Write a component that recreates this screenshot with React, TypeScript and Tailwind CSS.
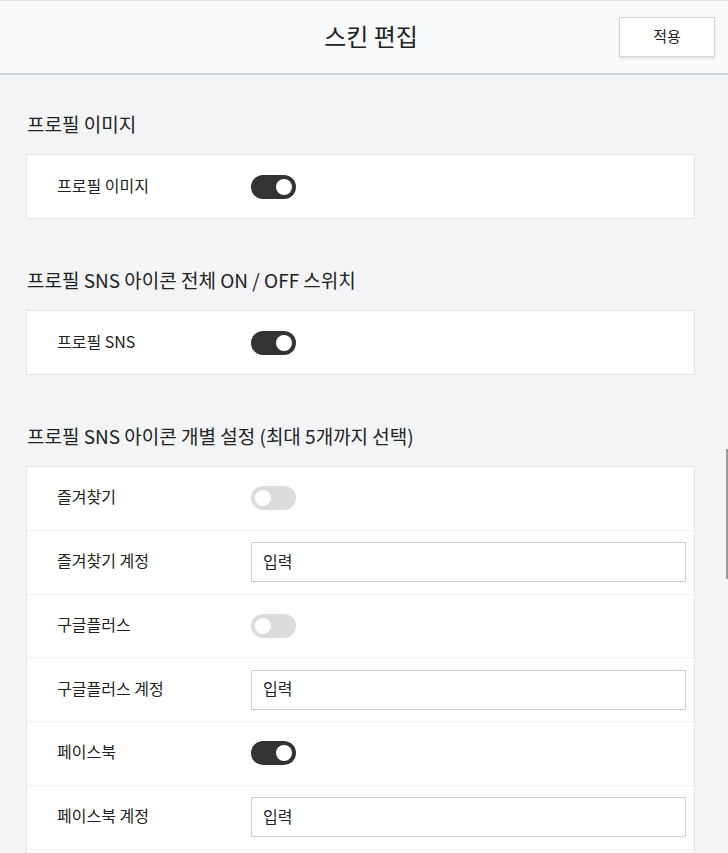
import React, { useState } from "react";

type Row =
  | { kind: "toggle"; label: string; on: boolean }
  | { kind: "input"; label: string };

const FONT = { fontFamily: '"Noto Sans CJK KR", "Noto Sans", sans-serif' };

function Toggle({ on, onChange }: { on: boolean; onChange: () => void }) {
  return (
    <button
      onClick={onChange}
      className={`relative h-6 w-[45px] shrink-0 rounded-full ${on ? "bg-[#333333]" : "bg-[#dcdcdc]"}`}
    >
      <span
        className={`absolute top-1 h-4 w-4 rounded-full bg-white ${on ? "right-1" : "left-1"}`}
      />
    </button>
  );
}

function SettingRow({ row, last, on, onToggle }: { row: Row; last: boolean; on: boolean; onToggle: () => void }) {
  return (
    <div className={`flex items-center ${last ? "h-[63px]" : "h-[63.75px] border-b border-[#eef0f3]"}`}>
      <div className="w-[224px] shrink-0 pb-[4px] pl-[30px] text-[16px] text-[#222]">{row.label}</div>
      {row.kind === "toggle" ? (
        <Toggle on={on} onChange={onToggle} />
      ) : (
        <input
          placeholder="입력"
          className="mr-[8px] h-10 flex-1 border border-[#c9d0d9] bg-white px-[11px] pb-[3px] text-[16px] text-[#222] outline-none placeholder:text-[#222]"
        />
      )}
    </div>
  );
}

function Section({ title, rows, first }: { title: string; rows: Row[]; first?: boolean }) {
  const [state, setState] = useState<boolean[]>(rows.map((r) => r.kind === "toggle" && r.on));
  return (
    <section className={first ? "" : "mt-[48px]"}>
      <h2 className="mb-[15px] flex h-7 items-center pb-[2px] pl-px text-[19px] text-[#222]">{title}</h2>
      <div className="border border-[#e1e5ec] bg-white">
        {rows.map((row, i) => (
          <SettingRow
            key={i}
            row={row}
            last={i === rows.length - 1}
            on={state[i]}
            onToggle={() => setState(state.map((v, j) => (j === i ? !v : v)))}
          />
        ))}
      </div>
    </section>
  );
}

export default function App() {
  return (
    <div className="relative min-h-[853px] bg-[#f3f4f6]" style={FONT}>
      {/* Header */}
      <header className="flex h-[75px] items-center justify-center border-t border-b-2 border-t-[#dcdfe3] border-b-[#cdd2d9] bg-[#f9fafb]">
        <h1 className="ml-[14px] pb-[2px] text-[24px] text-[#222]">스킨 편집</h1>
        <button className="absolute right-[13px] top-[17px] h-10 w-[96px] border border-[#cfd4da] bg-white pb-[2px] text-[15px] text-[#222] shadow-[0_2px_2px_rgba(0,0,0,0.08)]">
          적용
        </button>
      </header>

      <main className="pb-10 pl-[26px] pr-[33px] pt-[36px]">
        <Section first title="프로필 이미지" rows={[{ kind: "toggle", label: "프로필 이미지", on: true }]} />
        <Section
          title="프로필 SNS 아이콘 전체 ON / OFF 스위치"
          rows={[{ kind: "toggle", label: "프로필 SNS", on: true }]}
        />
        <Section
          title="프로필 SNS 아이콘 개별 설정 (최대 5개까지 선택)"
          rows={[
            { kind: "toggle", label: "즐겨찾기", on: false },
            { kind: "input", label: "즐겨찾기 계정" },
            { kind: "toggle", label: "구글플러스", on: false },
            { kind: "input", label: "구글플러스 계정" },
            { kind: "toggle", label: "페이스북", on: true },
            { kind: "input", label: "페이스북 계정" },
            { kind: "toggle", label: "트위터", on: false },
            { kind: "input", label: "트위터 계정" },
          ]}
        />
      </main>

      {/* scrollbar thumb */}
      <div className="absolute right-0 top-[449px] h-[130px] w-[2px] bg-[#9a9a9a]" />
    </div>
  );
}
